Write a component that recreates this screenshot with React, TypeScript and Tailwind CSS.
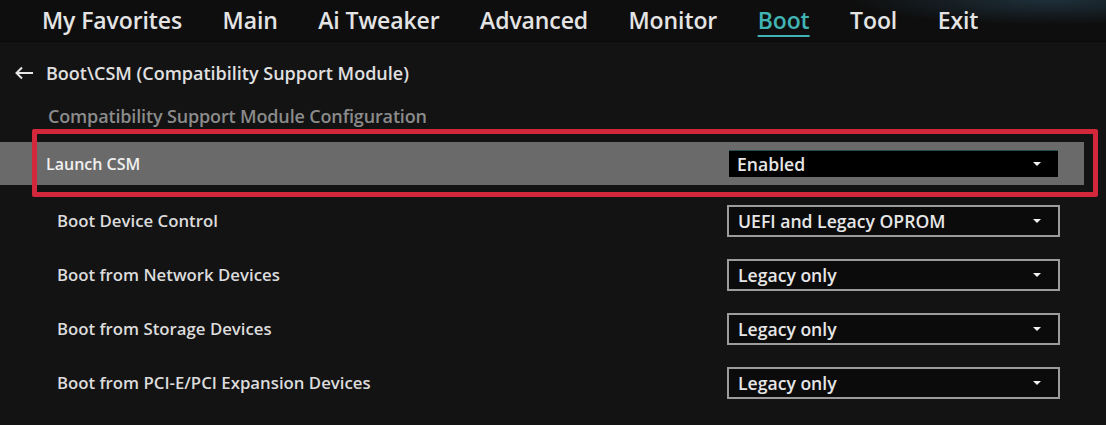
import { ReactNode } from "react";

const tabs = ["My Favorites", "Main", "Ai Tweaker", "Advanced", "Monitor", "Boot", "Tool", "Exit"];

const rows = [
  { label: "Boot Device Control", value: "UEFI and Legacy OPROM" },
  { label: "Boot from Network Devices", value: "Legacy only" },
  { label: "Boot from Storage Devices", value: "Legacy only" },
  { label: "Boot from PCI-E/PCI Expansion Devices", value: "Legacy only" },
];

function Caret() {
  return (
    <svg width="10" height="6" viewBox="0 0 10 6" className="shrink-0">
      <path d="M1 1 L9 1 L5 5 Z" fill="#f2f2f2" />
    </svg>
  );
}

function Select({ value, active }: { value: string; active?: boolean }) {
  return (
    <div
      className={
        active
          ? "flex h-[27px] w-[329px] items-center justify-between border-t border-[#2a4d55] bg-black pl-[8px] pr-[16px]"
          : "flex h-[32px] w-[333px] items-center justify-between border-2 border-[#9c9c9c] bg-[#0b0b0b] pl-[9px] pr-[16px]"
      }
    >
      <span className="text-[17.6px] font-semibold text-[#e6e6e6]">{value}</span>
      <Caret />
    </div>
  );
}

function Row({ label, children }: { label: string; children: ReactNode }) {
  return (
    <div className="flex h-[54px] items-center pr-[46px]">
      <span className="ml-[57px] flex-1 text-[16.8px] font-semibold text-[#dcdcdc]">{label}</span>
      {children}
    </div>
  );
}

export default function App() {
  return (
    <div
      className="relative h-[425px] w-[1106px] overflow-hidden bg-[#131313]"
      style={{ fontFamily: '"Open Sans", "Noto Sans", sans-serif' }}
    >
      {/* top menu */}
      <div className="relative flex h-[42px] items-center gap-[40.5px] border-b border-[#0a0a0a] bg-[#0e0e0e] pl-[42px]">
        <div
          className="pointer-events-none absolute inset-0"
          style={{ background: "radial-gradient(ellipse 18% 60% at 95% 0%, rgba(60,110,140,0.35), transparent)" }}
          aria-hidden
        />
        {tabs.map((t) => (
          <span
            key={t}
            className={
              t === "Boot"
                ? "relative text-[23px] font-semibold tracking-[-0.1px] text-[#41b3b4] underline decoration-[#41b3b4] decoration-2 underline-offset-[6px]"
                : "relative text-[23px] font-semibold tracking-[-0.1px] text-[#e4e4e4]"
            }
          >
            {t}
          </span>
        ))}
      </div>

      {/* breadcrumb */}
      <div className="flex h-[62px] items-center gap-[12px] pl-[14px]">
        <svg width="20" height="14" viewBox="0 0 20 14">
          <path d="M19 7 H3 M8 1.5 L2.5 7 L8 12.5" stroke="#e6e6e6" strokeWidth="2" fill="none" />
        </svg>
        <span className="text-[18px] font-semibold text-[#e0e0e0]">
          Boot\CSM (Compatibility Support Module)
        </span>
      </div>

      <div className="pl-[48px] text-[18px] leading-[24px] font-semibold tracking-[-0.15px] text-[#8b8b8b]">
        Compatibility Support Module Configuration
      </div>

      {/* selected row */}
      <div className="mt-[14px] flex h-[43px] w-[1084px] items-center justify-between bg-[#6a6a6a] pr-[26px]">
        <span className="pl-[46px] text-[16px] font-semibold text-[#f0f0f0]">Launch CSM</span>
        <Select value="Enabled" active />
      </div>

      <div className="mt-[9px]">
        {rows.map((r) => (
          <Row key={r.label} label={r.label}>
            <Select value={r.value} />
          </Row>
        ))}
      </div>

      {/* red highlight annotation */}
      <div className="pointer-events-none absolute left-[32px] top-[129px] h-[68px] w-[1066px] rounded-[2px] border-[5px] border-[#d3283c]" />
    </div>
  );
}
